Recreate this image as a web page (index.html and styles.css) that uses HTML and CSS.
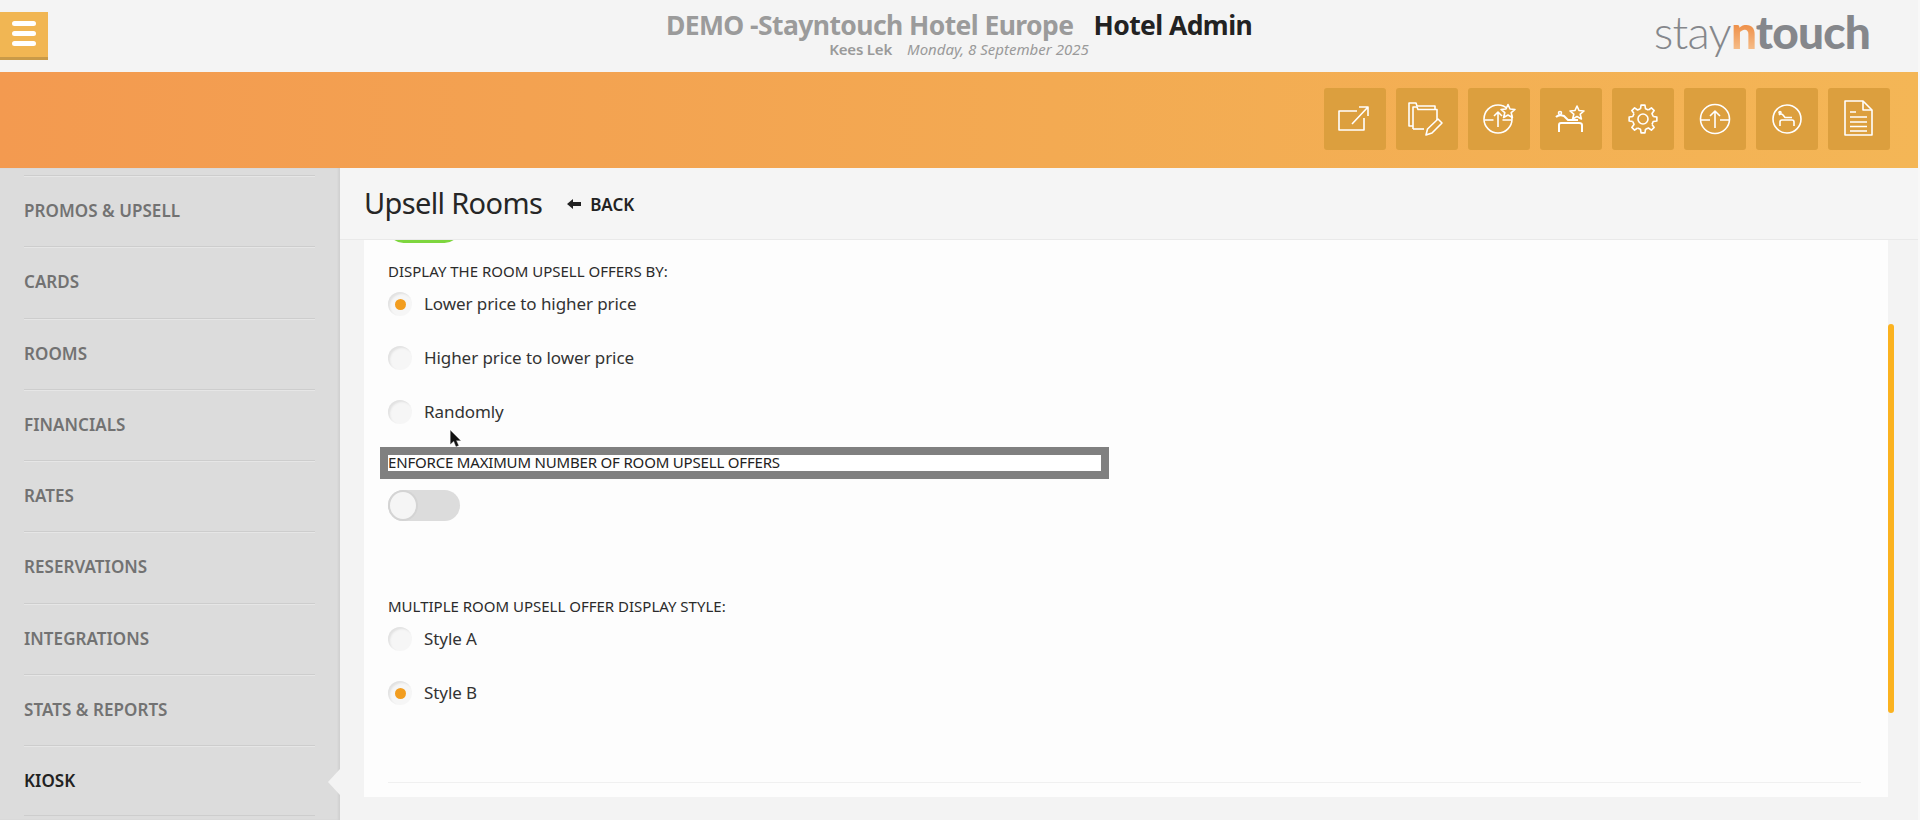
FILE: index.html
```html
<!DOCTYPE html>
<html lang="en">
<head>
<meta charset="utf-8">
<title>Upsell Rooms</title>
<link rel="stylesheet" href="styles.css">
</head>
<body>
<svg width="0" height="0" class="defs">
  <defs>
    <path id="tooth" d="M17.46 9.81L18.05 6.14H21.95L22.54 9.81L25.41 11"/>
  </defs>
</svg>
<div class="app">
  <header class="topbar">
    <div class="topbar-left">
      <button class="menu-btn"><span></span><span></span><span></span></button>
    </div>
    <div class="titles">
      <div class="title-line"><span class="hotel">DEMO -Stayntouch Hotel Europe</span><span class="admin">Hotel Admin</span></div>
      <div class="sub-line"><span class="user">Kees Lek</span><span class="date">Monday, 8 September 2025</span></div>
    </div>
    <div class="logo"><span class="logo-stay">stay</span><span class="logo-n">n</span><span class="logo-touch">touch</span></div>
  </header>

  <div class="band">
    <a class="tool"><svg viewBox="0 0 40 40"><path d="M22 12H4V31H29V19"/><path d="M17 25L33 8M24 8H33V17"/></svg></a>
    <a class="tool"><svg viewBox="0 0 40 40"><path d="M6 27H2V4H9L10 7H28V10"/><path d="M6 30V8H10L11 10.5H30V21"/><path d="M6 30H17"/><path d="M19 36L20.5 30L31 20L35 24L25 34Z"/></svg></a>
    <a class="tool"><svg viewBox="0 0 40 40"><circle cx="19" cy="20" r="14"/><path d="M5.5 21H14.5M23.5 21H32.5M19 28V13M15 17L19 13L23 17"/><path class="mask" d="M29 5.5L31 10L36 10.5L32.2 13.7L33.4 18.5L29 16L24.6 18.5L25.800 13.7L22 10.5L27 10Z"/></svg></a>
    <a class="tool"><svg viewBox="0 0 40 40"><path class="bold" d="M8 33V26Q8 24 10 24H28Q31 24 31 26V33"/><path class="bold" d="M5 18Q8 15 13 17L17 21H27"/><circle cx="9" cy="14" r="1.500"/><path class="mask" d="M26 7L28 11.5L33 12L29.2 15.2L30.4 20L26 17.500L21.6 20L22.8 15.2L19 12L24 11.500Z"/></svg></a>
    <a class="tool"><svg viewBox="0 0 40 40"><use href="#tooth"/><use href="#tooth" transform="rotate(45 20 20)"/><use href="#tooth" transform="rotate(90 20 20)"/><use href="#tooth" transform="rotate(135 20 20)"/><use href="#tooth" transform="rotate(180 20 20)"/><use href="#tooth" transform="rotate(225 20 20)"/><use href="#tooth" transform="rotate(270 20 20)"/><use href="#tooth" transform="rotate(315 20 20)"/><circle cx="20" cy="20" r="5"/></svg></a>
    <a class="tool"><svg viewBox="0 0 40 40"><circle cx="20" cy="20" r="14.5"/><path d="M5.5 21H15M25 21H34.5M20 29V12M15 17L20 12L25 17"/></svg></a>
    <a class="tool"><svg viewBox="0 0 40 40"><circle cx="20" cy="20" r="14"/><path d="M13 27V23Q13 21 15 21H25Q27 21 27 23V27"/><path d="M12 16Q14 14 16 16L18 18.500H25"/><circle cx="13" cy="13.500" r="1"/></svg></a>
    <a class="tool"><svg viewBox="0 0 40 40"><path d="M6 2H24L33 11V36H6Z"/><path d="M24 2V11H33"/><path d="M11 13H17M11 18H28M11 23H28M11 27.500H28M11 32H28"/></svg></a>
  </div>

  <div class="main">
    <nav class="sidebar">
      <a class="side-item">PROMOS &amp; UPSELL</a>
      <a class="side-item">CARDS</a>
      <a class="side-item">ROOMS</a>
      <a class="side-item">FINANCIALS</a>
      <a class="side-item">RATES</a>
      <a class="side-item">RESERVATIONS</a>
      <a class="side-item">INTEGRATIONS</a>
      <a class="side-item">STATS &amp; REPORTS</a>
      <a class="side-item active">KIOSK</a>
    </nav>
    <section class="content">
      <div class="content-head">
        <h1 class="page-title">Upsell Rooms</h1>
        <a class="back"><svg class="back-arrow" viewBox="0 0 14 10"><path d="M0 5L6 0V3H14V7H6V10Z"/></svg>BACK</a>
      </div>
      <div class="panel-row">
        <div class="panel">
          <div class="toggle on"></div>
          <div class="field-label first">DISPLAY THE ROOM UPSELL OFFERS BY:</div>
          <label class="radio-row"><span class="radio checked"></span>Lower price to higher price</label>
          <label class="radio-row"><span class="radio"></span>Higher price to lower price</label>
          <label class="radio-row"><span class="radio"></span>Randomly</label>
          <div class="focus-box">ENFORCE MAXIMUM NUMBER OF ROOM UPSELL OFFERS</div>
          <div class="toggle off"><span class="knob"></span></div>
          <div class="field-label second">MULTIPLE ROOM UPSELL OFFER DISPLAY STYLE:</div>
          <label class="radio-row"><span class="radio"></span>Style A</label>
          <label class="radio-row"><span class="radio checked"></span>Style B</label>
          <div class="panel-rule"></div>
        </div>
        <div class="scrollbar"></div>
      </div>
    </section>
  </div>
</div>
<svg class="cursor" viewBox="0 0 12 18"><path d="M0.500 0.500V14L3.800 11L6 16.500L8.500 15.500L6.300 10.500H10.500Z"/></svg>
</body>
</html>
```

FILE: styles.css
```css
* { box-sizing: border-box; }
html, body { margin: 0; padding: 0; }
body {
  width: 1920px;
  height: 820px;
  overflow: hidden;
  background: #f8f8f8;
  font-family: "Noto Sans", "Open Sans", sans-serif;
  color: #2a2a2a;
  position: relative;
}
.defs { position: absolute; }
.app { width: 1918px; height: 820px; display: flex; flex-direction: column; background: #f3f3f3; }

/* top bar */
.topbar { height: 72px; flex: none; display: grid; grid-template-columns: 1fr auto 1fr; background: #f4f4f4; }
.topbar-left { display: flex; align-items: flex-start; }
.menu-btn {
  width: 48px; height: 48px; margin-top: 12px; padding: 0 12px 3px;
  display: flex; flex-direction: column; justify-content: center; gap: 5px;
  background: #f1b653; border: 0; border-bottom: 3px solid #c99a48;
}
.menu-btn span { display: block; height: 5px; border-radius: 3px; background: #fff; }
.titles { display: flex; flex-direction: column; align-items: center; padding-top: 10px; }
.title-line { font-size: 26.5px; font-weight: 700; line-height: 30px; letter-spacing: -0.58px; white-space: nowrap; }
.hotel { color: #9b9b9b; }
.admin { color: #222; margin-left: 20px; }
.sub-line { font-size: 15px; line-height: 14px; margin-top: 2px; color: #9a9a9a; }
.user { font-weight: 600; margin-right: 15px; letter-spacing: -0.2px; }
.date { font-style: italic; }
.logo {
  justify-self: end; padding-right: 48px; padding-top: 2px;
  font-family: Lato, sans-serif; font-size: 46px; line-height: 60px; letter-spacing: -0.8px; color: #85878b; white-space: nowrap;
}
.logo-stay { font-weight: 300; }
.logo-n {
  font-weight: 900; color: transparent;
  background: linear-gradient(180deg, #ee8d45 35%, #f6bf8c 85%);
  -webkit-background-clip: text; background-clip: text;
}
.logo-touch { font-weight: 900; }

/* orange band */
.band {
  height: 96px; flex: none; display: flex; justify-content: flex-end; align-items: center; gap: 10px; padding: 0 28px 2px 0;
  background: linear-gradient(90deg, #f39a50 0%, #f3aa52 55%, #f4b656 100%);
}
.tool { width: 62px; height: 62px; display: flex; align-items: center; justify-content: center; border-radius: 3px; background: #dc9f3e; }
.tool svg { width: 40px; height: 40px; fill: none; stroke: #fff; stroke-width: 1.6; stroke-linejoin: round; }
.tool svg .mask { fill: #dc9f3e; }
.tool svg .bold { stroke-width: 2; }

/* main */
.main { flex: 1; display: flex; min-height: 0; }
.sidebar {
  width: 340px; flex: none; padding-top: 7px; overflow: hidden; display: flex; flex-direction: column;
  background: #dcdcdc; box-shadow: inset -2px 0 2px rgba(0,0,0,.05);
}
.side-item {
  position: relative; flex: none; height: 71.25px; margin: 0 25px 0 24px; padding-bottom: 1px; display: flex; align-items: center;
  font-size: 17px; font-weight: 600; letter-spacing: 0.05px; color: #727272;
  border-top: 1px solid #cdcdcd; box-shadow: inset 0 1px 0 #e6e6e6;
}
.side-item.active { color: #222; border-bottom: 1px solid #cdcdcd; }
.side-item.active::after {
  content: ""; position: absolute; right: -25px; top: 23px;
  border: 13px solid transparent; border-left: 0; border-right: 12px solid #f3f3f3;
}

/* content */
.content { flex: 1; min-width: 0; display: flex; flex-direction: column; }
.content-head { height: 72px; flex: none; display: flex; align-items: center; padding: 0 0 3px 24px; border-bottom: 1px solid #e9e9e9; background: #f5f5f5; }
.page-title { margin: 0; font-size: 29px; font-weight: 400; letter-spacing: -0.65px; color: #262626; }
.back { display: flex; align-items: center; margin: 4px 0 0 25px; font-size: 17px; font-weight: 600; color: #222; }
.back-arrow { width: 14px; height: 10px; margin-right: 9px; fill: #222; }
.panel-row { height: 557px; flex: none; display: flex; padding-left: 24px; }
.panel { flex: 1; min-width: 0; height: 557px; display: flex; flex-direction: column; padding-left: 24px; overflow: hidden; background: #fdfdfd; }
.scrollbar { width: 6px; height: 389px; margin: 84px 24px 0 0; border-radius: 3px; background: #fbb21f; }
.toggle { width: 72px; height: 31px; flex: none; border-radius: 16px; }
.toggle.on { margin-top: -28px; background: #7ed63f; }
.toggle.off { margin-top: 11px; padding: 0; background: #dcdcdc; }
.knob { display: block; width: 30px; height: 31px; border-radius: 50%; background: #f5f5f5; border: 2px solid #d4d4d4; }
.field-label { height: 20px; flex: none; font-size: 15px; line-height: 20px; color: #2b2b2b; }
.field-label.first { margin-top: 18px; }
.field-label.second { margin-top: 75px; }
.radio-row { height: 44px; flex: none; margin-bottom: 10px; padding-bottom: 2px; display: flex; align-items: center; gap: 12px; font-size: 17px; letter-spacing: -0.08px; color: #333; }
.field-label + .radio-row { margin-top: 1px; }
.radio { width: 24px; height: 24px; flex: none; margin-top: 2px; border-radius: 50%; background: #f6f6f6; box-shadow: inset 2px 2px 2px #e2e2e2; display: flex; align-items: center; justify-content: center; }
.radio.checked::after { content: ""; width: 11px; height: 11px; border-radius: 50%; background: #f29d1f; }
.focus-box {
  width: 729px; height: 32px; flex: none; margin: 3px 0 0 -8px; border: 8px solid #808080; background: #fff;
  font-size: 15px; line-height: 14px; letter-spacing: -0.18px; color: #222; white-space: nowrap;
}
.panel-rule { height: 1px; flex: none; margin: auto 27px 14px 0; background: #f0f0f0; }

/* mouse pointer */
.cursor { position: absolute; left: 450px; top: 430px; width: 12px; height: 18px; fill: #111; stroke: #555; stroke-width: .4; }
```
